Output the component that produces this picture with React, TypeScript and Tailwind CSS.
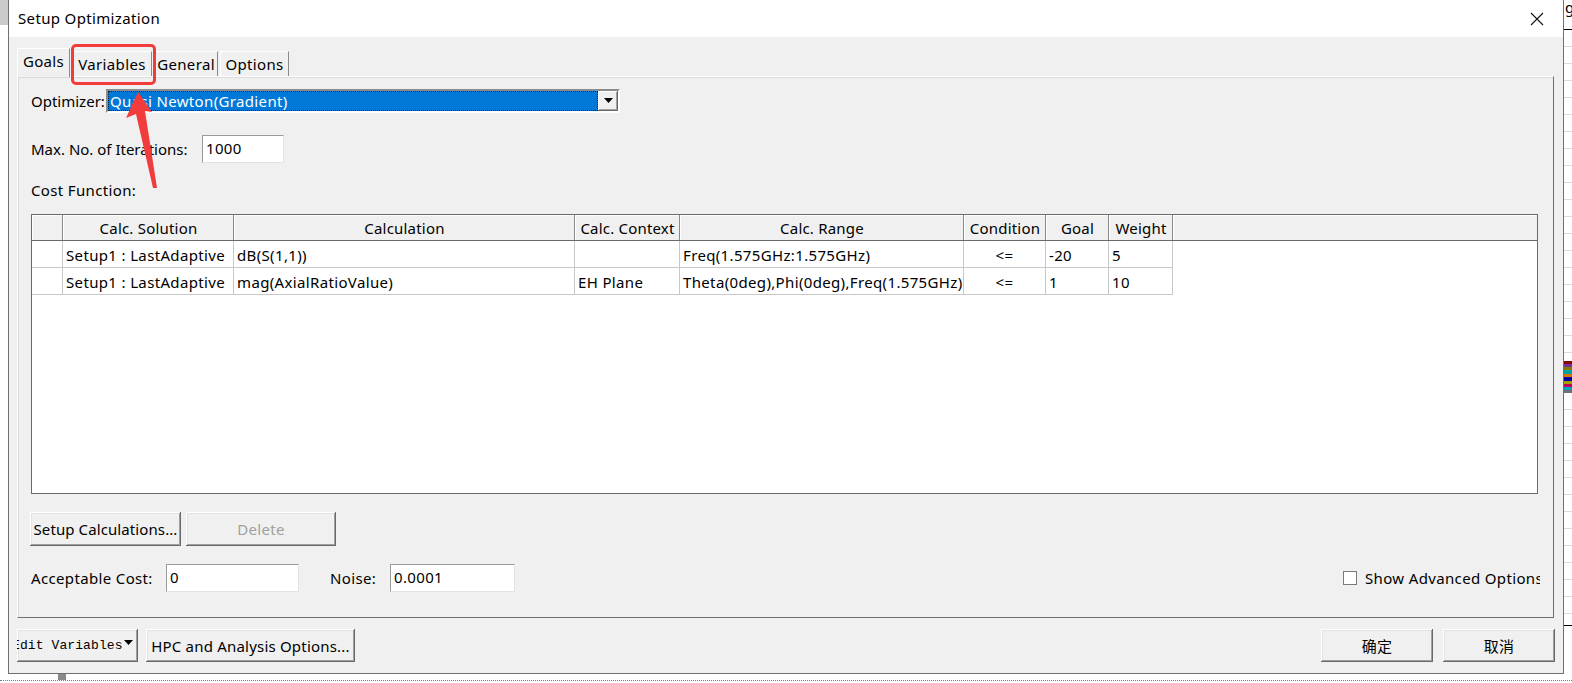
import React from "react";

const cols = [31, 171, 341, 105, 284, 82, 63, 64];
const headers = ["", "Calc. Solution", "Calculation", "Calc. Context", "Calc. Range", "Condition", "Goal", "Weight"];
const rows = [
  ["", "Setup1 : LastAdaptive", "dB(S(1,1))", "", "Freq(1.575GHz:1.575GHz)", "<=", "-20", "5"],
  ["", "Setup1 : LastAdaptive", "mag(AxialRatioValue)", "EH Plane", "Theta(0deg),Phi(0deg),Freq(1.575GHz)", "<=", "1", "10"],
];

function Btn({ children, className = "", disabled = false }: { children: React.ReactNode; className?: string; disabled?: boolean }) {
  return (
    <div
      className={
        "flex items-center justify-center bg-[#f0f0f0] shadow-[inset_-1px_-1px_0_#696969,inset_1px_1px_0_#ffffff,inset_-2px_-2px_0_#a0a0a0,inset_2px_2px_0_#e3e3e3] " +
        (disabled ? "text-[#a0a0a0] " : "text-black ") +
        className
      }
    >
      {children}
    </div>
  );
}

function Input({ value, className = "" }: { value: string; className?: string }) {
  return (
    <div className={"bg-white border border-t-[#9a9a9a] border-l-[#9a9a9a] border-b-[#e3e3e3] border-r-[#e3e3e3] flex items-start pl-[3px] pt-[2px] text-black " + className}>
      {value}
    </div>
  );
}

function Tab({ label, selected = false, w }: { label: string; selected?: boolean; w: string }) {
  return (
    <div
      className={
        (selected
          ? "h-[29px] z-10 mb-[-1px] pb-[4px] bg-[#f0f0f0] border-t border-l border-r border-t-white border-l-white border-r-[#8a8a8a] "
          : "h-[25px] pb-[1px] bg-[#f0f0f0] border-t border-l border-r border-t-white border-l-white border-r-[#8a8a8a] ") +
        "flex items-center justify-center relative whitespace-nowrap " +
        w
      }
    >
      {label}
    </div>
  );
}

export default function App() {
  return (
    <div className="w-[1572px] h-[683px] bg-white overflow-hidden flex flex-col relative font-['Noto_Sans','Noto_Sans_CJK_SC',sans-serif] text-[15px] leading-[20px] tracking-[0.35px] text-black">
      <div className="h-[674px] flex">
        {/* left desktop strip */}
        <div className="w-[8px] flex flex-col">
          <div className="h-[25px] bg-[#cbcbcb]" />
        </div>
        {/* dialog */}
        <div className="w-[1556px] border-l border-r border-b border-[#707070] flex flex-col">
          <div className="h-[37px] bg-white flex items-center pl-[9px] pr-[19px] justify-between">
            <span className="text-[15px] mt-[-1px]">Setup Optimization</span>
            <svg width="14" height="14" viewBox="0 0 14 14">
              <path d="M1 1L13 13M13 1L1 13" stroke="#111" strokeWidth="1.1" />
            </svg>
          </div>
          <div className="flex-1 bg-[#f0f0f0] pl-[8px] pr-[9px] flex flex-col">
            {/* tabs */}
            <div className="flex items-end pt-[11px] h-[39px] relative z-10">
              <Tab label="Goals" selected w="w-[53px]" />
              <div className="w-[2px]" />
              <Tab label="Variables" w="w-[80px]" />
              <div className="w-[2px]" />
              <Tab label="General" w="w-[64px]" />
              <div className="w-[2px]" />
              <Tab label="Options" w="w-[69px]" />
            </div>
            {/* panel */}
            <div className="h-[542px] w-[1537px] border border-t-[#ffffff] border-l-[#ffffff] border-b-[#707070] border-r-[#707070] shadow-[inset_0_1px_0_#dadada,inset_1px_0_0_#dadada] pl-[13px] flex flex-col">
              {/* optimizer */}
              <div className="flex items-center mt-[12px] h-[24px]">
                <span className="w-[75px] whitespace-nowrap tracking-[0px]">Optimizer:</span>
                <div className="w-[514px] h-[24px] border-2 border-t-[#8c8c8c] border-l-[#8c8c8c] border-b-white border-r-white bg-white flex">
                  <div className="flex-1 bg-[#0078d7] text-white outline-1 outline-dotted outline-[#222] outline-offset-[-1px] pl-[2px] flex items-center leading-[18px]">
                    Quasi Newton(Gradient)
                  </div>
                  <div className="w-[20px] bg-[#f0f0f0] shadow-[inset_-1px_-1px_0_#696969,inset_1px_1px_0_#ffffff,inset_-2px_-2px_0_#a0a0a0] flex items-center justify-center">
                    <svg width="9" height="6" viewBox="0 0 9 6">
                      <path d="M0 0H9L4.5 5Z" fill="#000" />
                    </svg>
                  </div>
                </div>
              </div>
              {/* iterations */}
              <div className="flex items-center mt-[22px] h-[28px]">
                <span className="w-[171px] whitespace-nowrap tracking-[0px]">Max. No. of Iterations:</span>
                <Input value="1000" className="w-[82px] h-[28px]" />
              </div>
              <div className="mt-[17px] h-[20px]">Cost Function:</div>
              {/* table */}
              <div className="mt-[14px] w-[1507px] h-[280px] border border-[#6a6a6a] bg-white flex flex-col">
                <div className="flex h-[26px] bg-[#f0f0f0] border-b border-[#6a6a6a]">
                  {headers.map((h, i) => (
                    <div
                      key={i}
                      style={{ width: cols[i] }}
                      className="h-full flex items-center justify-center shadow-[inset_-1px_0_0_#8a8a8a,inset_1px_1px_0_#ffffff] whitespace-nowrap overflow-hidden tracking-[0.2px]"
                    >
                      {h}
                    </div>
                  ))}
                  <div className="flex-1 h-full shadow-[inset_1px_1px_0_#ffffff]" />
                </div>
                {rows.map((r, ri) => (
                  <div key={ri} className="flex h-[27px]">
                    {r.map((c, ci) => (
                      <div
                        key={ci}
                        style={{ width: cols[ci] }}
                        className={
                          "h-full flex items-center pt-[1px] border-r border-b border-[#c8c8c8] whitespace-nowrap overflow-hidden " +
                          (ci === 5 ? "justify-center" : "pl-[3px]")
                        }
                      >
                        {c}
                      </div>
                    ))}
                  </div>
                ))}
              </div>
              {/* buttons */}
              <div className="flex mt-[18px] ml-[-1px] gap-[5px]">
                <Btn className="w-[151px] h-[34px] whitespace-nowrap tracking-[0.1px]">Setup Calculations...</Btn>
                <Btn className="w-[150px] h-[34px]" disabled>
                  Delete
                </Btn>
              </div>
              {/* acceptable cost */}
              <div className="flex items-center mt-[18px] h-[28px]">
                <span className="w-[135px] whitespace-nowrap">Acceptable Cost:</span>
                <Input value="0" className="w-[133px] h-[28px]" />
                <span className="ml-[31px] w-[60px]">Noise:</span>
                <Input value="0.0001" className="w-[125px] h-[28px]" />
                <div className="flex-1" />
                <div className="flex items-center w-[197px] overflow-hidden whitespace-nowrap mr-[13px]">
                  <div className="w-[14px] h-[14px] border border-[#7a7a7a] bg-white shrink-0" />
                  <span className="ml-[8px]">Show Advanced Options</span>
                </div>
              </div>
            </div>
            {/* bottom buttons */}
            <div className="flex mt-[11px] h-[33px] items-stretch">
              <Btn className="w-[121px] overflow-hidden !justify-start">
                <span className="font-['Liberation_Mono',monospace] text-[13px] ml-[-5px] whitespace-nowrap tracking-[0.1px]">Edit Variables</span>
                <svg width="9" height="6" viewBox="0 0 9 6" className="ml-[1px] mt-[-6px] shrink-0">
                  <path d="M0 0H9L4.5 5Z" fill="#000" />
                </svg>
              </Btn>
              <Btn className="w-[209px] ml-[8px] whitespace-nowrap tracking-[0.2px]">HPC and Analysis Options...</Btn>
              <div className="flex-1" />
              <Btn className="w-[112px] shadow-[inset_-1px_-1px_0_#404040,inset_1px_1px_0_#ffffff,inset_-2px_-2px_0_#808080,inset_2px_2px_0_#e3e3e3]">确定</Btn>
              <Btn className="w-[112px] ml-[10px] mr-[-1px]">取消</Btn>
            </div>
          </div>
        </div>
        {/* right desktop strip */}
        <div className="flex-1 flex flex-col overflow-hidden">
          <div className="h-[30px] border-b border-black text-[15px] leading-[14px] pl-[1px]">g</div>
          {Array.from({ length: 19 }).map((_, i) => (
            <div key={i} className="h-[17px] border-b border-[#dcdcdc]" />
          ))}
          <div className="h-[8px]" />
          <div className="h-[32px] flex flex-col">
            <div className="h-[3px] bg-[#8b0000]" />
            <div className="h-[3px] bg-[#7030a0]" />
            <div className="h-[3px] bg-[#808000]" />
            <div className="h-[4px] bg-[#00a0a0]" />
            <div className="h-[3px] bg-[#e07000]" />
            <div className="h-[4px] bg-[#0000a0]" />
            <div className="h-[3px] bg-[#a0a000]" />
            <div className="h-[3px] bg-[#c00060]" />
            <div className="h-[3px] bg-[#00a0c0]" />
            <div className="h-[3px] bg-[#707070]" />
          </div>
          {Array.from({ length: 13 }).map((_, i) => (
            <div key={i} className="h-[17px] border-b border-[#dcdcdc]" />
          ))}
          <div className="h-[12px] border-b border-black" />
        </div>
      </div>
      {/* bottom desktop strip */}
      <div className="h-[9px] flex flex-col">
        <div className="h-[6px] flex">
          <div className="w-[58px]" />
          <div className="w-[8px] bg-[#8a8a8a]" />
        </div>
        <div className="h-[1px] border-b border-dotted border-[#6a7a9a]" />
      </div>
      {/* annotation: red rectangle and arrow */}
      <div className="absolute left-[71px] top-[44px] w-[85px] h-[41px] border-[3px] border-[#f23b3b] rounded-[5px] z-20" />
      <svg className="absolute left-0 top-0 z-20" width="200" height="200" viewBox="0 0 200 200">
        <polygon points="138,92 152,112 145,111 157,188 153,188 136,114 126,118" fill="#f23b3b" />
      </svg>
    </div>
  );
}
